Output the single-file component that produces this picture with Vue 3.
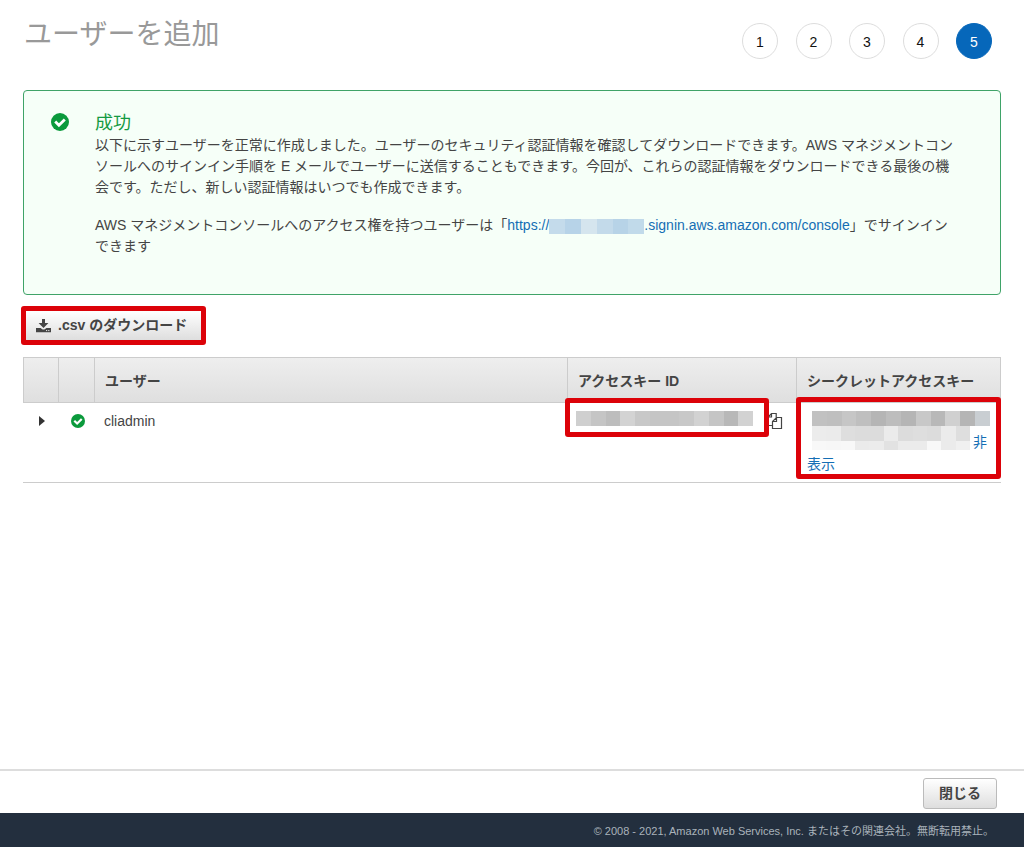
<script setup>
const steps = [1, 2, 3, 4, 5]
const currentStep = 5

const accountMask = ['#c4dbeb', '#b7d3e8', '#d5e5ee', '#c3daea', '#b7d3e7', '#c1daea']
const keyMask = ['#cfcfcf', '#c5c5c5', '#bdbdbd', '#d3d3d3', '#c8c8c8', '#c5c5c5', '#c5c5c5', '#c8c8c8', '#d2d2d2', '#c5c5c5', '#b8b8b8', '#d2d2d2']
const secretMask = [
  ['#c1c1c1', '#bfbfbf', '#c6c6c6', '#bfbfbf', '#b5b5b5', '#bdbdbd', '#b5b5b5', '#c8c8c8', '#b8b8b8', '#d0d0d0', '#b5b5b5', '#c9ced2'],
  ['#ececec', '#ebebeb', '#dedede', '#dcdcdc', '#dcdcdc', '#ebebeb', '#dcdcdc', '#dedede', '#dcdcdc', '#ebebeb', '#dedede'],
  ['#f8f8f8', '#f7f7f7', '#f8f8f8', '#ebebeb', '#ececec', '#e2e2e2', '#ebebeb', '#ebebeb', '#f8f8f8', '#ebebeb', '#f0f0f0'],
]
</script>

<template>
  <div class="page" lang="ja">
    <header class="head">
      <h1>ユーザーを追加</h1>
      <ol class="steps">
        <li v-for="n in steps" :key="n" :class="{ current: n === currentStep }">{{ n }}</li>
      </ol>
    </header>

    <main>
      <section class="notice">
        <svg class="ok ok-large" viewBox="0 0 18 18" aria-hidden="true">
          <circle cx="9" cy="9" r="9" />
          <path d="M4.2 8.6 L7.9 12.2 L13.8 6.4" />
        </svg>
        <div class="notice-body">
          <h2>成功</h2>
          <p>以下に示すユーザーを正常に作成しました。ユーザーのセキュリティ認証情報を確認してダウンロードできます。AWS マネジメントコンソールへのサインイン手順を E メールでユーザーに送信することもできます。今回が、これらの認証情報をダウンロードできる最後の機会です。ただし、新しい認証情報はいつでも作成できます。</p>
          <p>AWS マネジメントコンソールへのアクセス権を持つユーザーは「<a href="#">https://<span class="mask mask-inline"><i v-for="(c, i) in accountMask" :key="i" :style="{ background: c }"></i></span>.signin.aws.amazon.com/console</a>」でサインインできます</p>
        </div>
      </section>

      <div class="toolbar">
        <button type="button" class="download">
          <svg viewBox="0 0 15 14" aria-hidden="true">
            <path d="M6 0h3v4h3.4L7.5 8.9 2.6 4H6z" />
            <path d="M0 8.9h4.6l2 1.7h1.8l2-1.7H15v4.4H0z" />
            <path class="dots" d="M10 11.6h1.2M12.2 11.6h1.2" />
          </svg>
          <span>.csv のダウンロード</span>
        </button>
      </div>

      <table>
        <thead>
          <tr>
            <th class="col-icon"></th>
            <th class="col-icon"></th>
            <th>ユーザー</th>
            <th class="col-key">アクセスキー ID</th>
            <th class="col-secret">シークレットアクセスキー</th>
          </tr>
        </thead>
        <tbody>
          <tr>
            <td class="icon-cell">
              <button type="button" class="expand" aria-label="展開">
                <svg viewBox="0 0 6 10" aria-hidden="true"><path d="M0 0L6 5L0 10z" /></svg>
              </button>
            </td>
            <td class="icon-cell">
              <svg class="ok" viewBox="0 0 18 18" aria-hidden="true">
                <circle cx="9" cy="9" r="9" />
                <path d="M4.2 8.6 L7.9 12.2 L13.8 6.4" />
              </svg>
            </td>
            <td class="user">cliadmin</td>
            <td class="key">
              <div class="key-row">
                <span class="mask key-mask"><i v-for="(c, i) in keyMask" :key="i" :style="{ background: c }"></i></span>
                <button type="button" class="copy" aria-label="コピー">
                  <svg viewBox="0 0 16 18" aria-hidden="true">
                    <path d="M9.2 5.5V1.5H4.5L1 5V13.5H6M4.5 1.5V5H1" />
                    <path d="M9.5 5.5H14.5V16.5H5.5V9.5zM9.5 5.5V9.5H5.5" />
                  </svg>
                </button>
              </div>
              <span class="frame key-frame"></span>
            </td>
            <td class="secret">
              <span class="secret-mask">
                <span v-for="(row, r) in secretMask" :key="r" class="mask"><i v-for="(c, i) in row" :key="i" :style="{ background: c }"></i></span>
              </span>
              <a href="#" class="hide"><span class="indent"></span>非<br>表示</a>
              <span class="frame secret-frame"></span>
            </td>
          </tr>
        </tbody>
      </table>
    </main>

    <div class="actions">
      <button type="button" class="close">閉じる</button>
    </div>
    <footer>© 2008 - 2021, Amazon Web Services, Inc. またはその関連会社。無断転用禁止。</footer>
  </div>
</template>

<style>
body {
  margin: 0;
  background: #fff;
}
</style>

<style scoped>
* {
  box-sizing: border-box;
}
.page {
  display: flex;
  flex-direction: column;
  min-height: 100vh;
  font-family: "Liberation Sans", "Noto Sans CJK JP", sans-serif;
  font-size: 14px;
  line-height: 21px;
  color: #444;
}
h1, h2, p, ol {
  margin: 0;
  padding: 0;
  font-weight: 400;
}
a {
  color: #146eb4;
  text-decoration: none;
}
button {
  font: inherit;
  color: inherit;
  cursor: pointer;
}
.head {
  display: flex;
  justify-content: space-between;
  align-items: flex-start;
  padding: 14px 32px 0 24px;
  height: 90px;
}
h1 {
  font-size: 28px;
  line-height: 42px;
  color: #999;
}
.steps {
  display: flex;
  justify-content: space-between;
  width: 250px;
  margin-top: 9px;
  list-style: none;
}
.steps li {
  width: 36px;
  height: 36px;
  border: 1px solid #ddd;
  border-radius: 50%;
  line-height: 36px;
  text-align: center;
  color: #111;
}
.steps .current {
  background: #0667ba;
  border-color: #0667ba;
  color: #fff;
}
main {
  flex: 1;
  padding: 0 23px;
}
.notice {
  display: flex;
  gap: 26px;
  min-height: 205px;
  padding: 20px 40px 36px 27px;
  border: 1px solid #3fa368;
  border-radius: 4px;
  background: #f6fff8;
}
.ok {
  flex: none;
  display: block;
  width: 14px;
  height: 14px;
}
.ok circle {
  fill: #0b9a3c;
}
.ok path {
  fill: none;
  stroke: #fff;
  stroke-width: 2.8;
}
.ok-large {
  width: 18px;
  height: 18px;
  margin-top: 2px;
}
.notice h2 {
  font-size: 18px;
  line-height: 24px;
  color: #149a42;
}
.notice p + p {
  margin-top: 17px;
}
.mask {
  display: flex;
  height: 15px;
}
.mask i {
  flex: 1;
}
.mask-inline {
  display: inline-flex;
  width: 95px;
  vertical-align: -4px;
}
.toolbar {
  display: flex;
  padding: 11px 0 12px;
  margin-left: -2px;
}
.download {
  display: flex;
  align-items: center;
  gap: 7px;
  height: 39px;
  padding: 0 14px 0 10px;
  border: 5px solid #dc0209;
  border-radius: 3px;
  background: linear-gradient(#fff, #dedede);
  font-weight: 700;
}
.download svg {
  width: 15px;
  height: 14px;
  fill: #444;
}
.download .dots {
  stroke: #eee;
  stroke-width: 1;
}
table {
  width: 100%;
  table-layout: fixed;
  border-collapse: separate;
  border-spacing: 0;
}
th {
  height: 46px;
  padding: 2px 10px 0;
  border: solid #ccc;
  border-width: 1px 1px 1px 0;
  background: linear-gradient(#eee, #dfdfdf);
  text-align: left;
  white-space: nowrap;
}
th:first-child {
  border-left-width: 1px;
}
.col-icon {
  width: 36px;
}
.col-key {
  width: 229px;
}
.col-secret {
  width: 204px;
}
tbody tr td {
  position: relative;
  height: 80px;
  padding: 8px 9px;
  border-bottom: 1px solid #ccc;
  vertical-align: top;
}
tbody .icon-cell {
  padding: 11px 12px;
}
.expand {
  display: block;
  padding: 2px 4px;
  border: 0;
  background: none;
}
.expand svg {
  display: block;
  width: 6px;
  height: 10px;
  fill: #333;
}
.key-row {
  display: flex;
  gap: 14px;
}
tbody .key {
  padding-left: 8px;
}
.key-mask {
  width: 177px;
}
.copy {
  flex: none;
  padding: 0;
  border: 0;
  background: none;
}
.copy svg {
  display: block;
  width: 16px;
  height: 18px;
  margin-top: 1px;
  fill: none;
  stroke: #444;
  stroke-width: 1.2;
}
.frame {
  position: absolute;
  border: 5px solid #dc0209;
  border-radius: 3px;
  pointer-events: none;
}
.key-frame {
  left: -3px;
  right: 28px;
  top: -5px;
  height: 39px;
}
.secret-frame {
  left: -1px;
  right: 0;
  top: -6px;
  height: 82px;
}
.secret-mask {
  position: absolute;
  top: 8px;
  left: 15px;
  right: 11px;
}
.secret-mask .mask:not(:first-child) {
  margin-right: 20px;
}
.secret-mask .mask:last-child {
  height: 9px;
}
tbody .secret {
  padding: 28px 10px 0;
}
.hide {
  display: block;
  line-height: 22px;
}
.indent {
  display: inline-block;
  width: 166px;
}
.actions {
  display: flex;
  justify-content: flex-end;
  padding: 7px 27px 4px;
  border-top: 2px solid #ddd;
}
.close {
  height: 31px;
  padding: 0 15px;
  border: 1px solid #bbb;
  border-radius: 3px;
  background: linear-gradient(#fff, #dedede);
  font-weight: 700;
}
footer {
  padding: 8px 30px 6px;
  background: #232f3e;
  font-size: 11px;
  line-height: 20px;
  text-align: right;
  color: #aab3bb;
}
</style>
